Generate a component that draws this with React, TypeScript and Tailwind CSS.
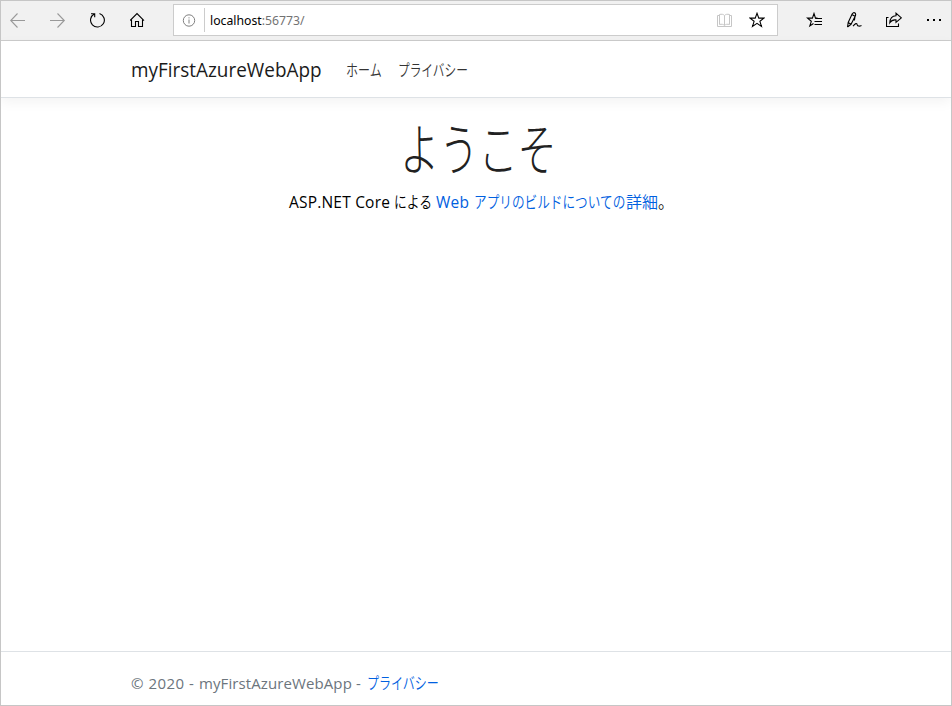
import React from "react";

const latin = "font-['Open_Sans','Noto_Sans',sans-serif]";
const japanese = "font-['Noto_Sans_CJK_JP',sans-serif] font-[350]";

type TextProps = { box: string; className?: string; children: React.ReactNode };

function Fit({ box, className = "", children }: TextProps) {
  return (
    <span className={`inline-block shrink-0 whitespace-pre ${box}`}>
      <span className={`inline-block origin-left whitespace-pre ${className}`}>{children}</span>
    </span>
  );
}

type IconProps = { children: React.ReactNode; className?: string };

function Icon({ children, className = "" }: IconProps) {
  return (
    <svg
      viewBox="0 0 16 16"
      className={`size-4 shrink-0 ${className}`}
      fill="none"
      stroke="currentColor"
      strokeWidth="1.1"
    >
      {children}
    </svg>
  );
}

function BrowserBar() {
  return (
    <div className="flex h-10 shrink-0 items-center border-b border-[#cccccc] bg-[#f1f1f1] pb-px text-black">
      <div className="flex w-[172px] shrink-0 items-center gap-6 pl-[9px]">
        <Icon className="text-[#999999]">
          <path d="M.5 8.500H15M7.500 1.500L.7 8.500l6.800 7" />
        </Icon>
        <Icon className="text-[#999999]">
          <path d="M0 8.500H14.500M7.500 1.500l6.800 7-6.800 7" />
        </Icon>
        <Icon>
          <path d="M4.200 2A6.900 6.900 0 1 0 9.500 1.500M1 1.700H4.700V5.300" />
        </Icon>
        <Icon>
          <path d="M0 8.600L7 1.600l7 7M1.500 7.700V14.500H5.500V9.500H8.500V14.500H12.500V7.700" />
        </Icon>
      </div>
      <div className="flex h-8 w-[605px] shrink-0 items-center border border-[#cccccc] bg-white">
        <Icon className="ml-[7px] text-[#808080]">
          <circle cx="8" cy="8.500" r="5.700" strokeWidth="1" />
          <path d="M8 7.500V11.500M8 5.300V6.400" strokeWidth="1" />
        </Icon>
        <div className="ml-[7px] h-6 w-px bg-[#cccccc]" />
        <div className="ml-[5px] flex-1 text-[12.500px]">
          <Fit box="w-[120px]" className="scale-x-[0.98] pt-[2px] font-['Noto_Sans',sans-serif]">
            localhost<span className="text-[#737373]">:56773/</span>
          </Fit>
        </div>
        <Icon className="mr-4 text-[#c6c6c6]">
          <path d="M7.500 3.500V13M7.500 3.500C6.500 2.200 4.500 2 2.500 2.500V12.500C4.500 12 6.500 12.200 7.500 13.500 8.500 12.200 10.500 12 12.500 12.500V2.500C10.500 2 8.500 2.200 7.500 3.500M2.500 3.500H.5V14.500H14.500V3.500H12.500" strokeWidth="1" />
        </Icon>
        <Icon className="mr-3">
          <path d="M8 1.300L9.800 6.100H15L10.900 9.300 12.500 14.500 8 11.400 3.500 14.500 5.100 9.300 1 6.100H6.200Z" />
        </Icon>
      </div>
      <div className="ml-7 flex items-center gap-6">
        <Icon>
          <path d="M11.500 6.100H9.500L8 1.500 6.400 6.100H1.500L5.300 9.300 3.800 14 7.500 11.500M9.500 6.500H16M8.500 9.500H16M8.500 12.500H16" />
        </Icon>
        <Icon>
          <path d="M1.500 15L2.200 10.500 5.900 2.400Q7.500-.2 9 1 10.200 2.200 9.200 4.200L5 12.300 1.500 15M5.800 2.600L9 4.300M9 4.300L8.400 8.500M2.200 10.500L5 12.300M7 14.200Q10.500 9.800 11.200 12.700 12 15 15.500 13.500" />
        </Icon>
        <Icon>
          <path d="M2.500 5.500H.5V14.500H12.500V11.500M10 1.200L15.300 5.900 10 10.300V7.900C7 7.500 5.200 8.600 3.800 10.800 4 7 6 4 10 3.800Z" />
        </Icon>
        <svg viewBox="0 0 16 16" className="size-4" fill="currentColor">
          <path d="M1 7h2v2H1zM7 7h2v2H7zM13 7h2v2h-2z" />
        </svg>
      </div>
    </div>
  );
}

function SiteHeader() {
  return (
    <header className="flex h-[57px] shrink-0 items-center border-b border-[#dee2e6] pl-[130px] shadow-[0_4px_12px_rgba(0,0,0,0.05)]">
      <a className="pt-px text-[19.500px] leading-[30px] text-[#1a1a1a]">
        <Fit box="w-[215px]" className={`scale-x-[0.97] ${latin}`}>
          myFirstAzureWebApp
        </Fit>
      </a>
      <nav className="flex text-[16px] leading-6 text-[#343434]">
        <Fit box="w-[52px]" className={`scale-x-[0.75] ${japanese}`}>ホーム</Fit>
        <Fit box="w-[80px]" className={`scale-x-[0.73] ${japanese}`}>プライバシー</Fit>
      </nav>
    </header>
  );
}

export default function App() {
  return (
    <div className="flex h-[706px] w-[952px] flex-col overflow-hidden border border-[#c6c6c6] bg-white">
      <BrowserBar />
      <SiteHeader />
      <main className="flex flex-1 flex-col pt-[14px]">
        <h1 className="flex h-[76px] pl-[399px] text-[56px] leading-[67px] text-[#212121]">
          <Fit box="w-[156px]" className="scale-x-[0.7] font-['Noto_Sans_CJK_JP',sans-serif] font-light">
            ようこそ
          </Fit>
        </h1>
        <p className="flex pl-[288px] pt-px text-[16px] leading-6 text-black">
          <Fit box="w-[105px]" className={`pt-px text-[15.500px] tracking-[0.2px] ${latin}`}>ASP.NET Core </Fit>
          <Fit box="w-[42px]" className={`scale-x-[0.8] ${japanese}`}>による</Fit>
          <a className="flex text-[#0060e0]">
            <Fit box="w-[38px]" className={`pt-px text-[15.500px] tracking-[0.3px] ${latin}`}>Web </Fit>
            <Fit box="w-[152px]" className={`scale-x-[0.79] ${japanese}`}>アプリのビルドについての</Fit>
            <Fit box="w-[32px]" className={japanese}>詳細</Fit>
          </a>
          <Fit box="w-4" className={japanese}>。</Fit>
        </p>
      </main>
      <footer className="flex h-[54px] shrink-0 items-center border-t border-[#dee2e6] pl-[130px] pt-[8px] text-[16px] leading-6 text-[#6c757d]">
        <Fit box="w-[68px]" className={`pt-px text-[15px] tracking-[0.5px] ${latin}`}>© 2020 - </Fit>
        <Fit box="w-[168px]" className={`pt-px text-[15px] tracking-[0.1px] ${latin}`}>myFirstAzureWebApp - </Fit>
        <a className="text-[#0060e0]">
          <Fit box="w-[76px]" className={`scale-x-[0.75] ${japanese}`}>プライバシー</Fit>
        </a>
      </footer>
    </div>
  );
}
